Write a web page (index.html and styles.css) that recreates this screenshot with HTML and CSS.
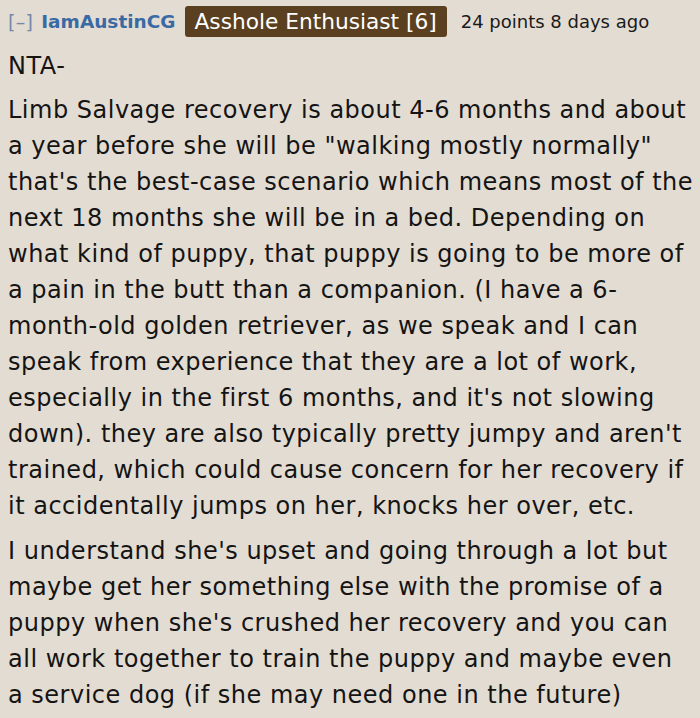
FILE: index.html
```html
<!DOCTYPE html>
<html>
<head>
<meta charset="utf-8">
<link rel="stylesheet" href="styles.css">
</head>
<body>
<div class="comment">
  <div class="header">
    <span class="toggle">[–]</span>
    <span class="author">IamAustinCG</span>
    <span class="flair">Asshole Enthusiast [6]</span>
    <span class="meta">24 points 8 days ago</span>
  </div>
  <div class="body">
    <p>NTA-</p>
    <p>Limb Salvage recovery is about 4-6 months and about a year before she will be "walking mostly normally" that's the best-case scenario which means most of the next 18 months she will be in a bed. Depending on what kind of puppy, that puppy is going to be more of a pain in the butt than a companion. (I have a 6-month-old golden retriever, as we speak and I can speak from experience that they are a lot of work, especially in the first 6 months, and it's not slowing down). they are also typically pretty jumpy and aren't trained, which could cause concern for her recovery if it accidentally jumps on her, knocks her over, etc.</p>
    <p>I understand she's upset and going through a lot but maybe get her something else with the promise of a puppy when she's crushed her recovery and you can all work together to train the puppy and maybe even a&nbsp;service dog (if she may need one in the future)</p>
  </div>
</div>
</body>
</html>
```
FILE: styles.css
```css
html, body {
  margin: 0;
  padding: 0;
  background: #e3dcd2;
}
.comment {
  padding: 6px 0 0 8px;
  font-family: "DejaVu Sans", Verdana, sans-serif;
  color: #141414;
}
.header {
  display: flex;
  align-items: center;
  height: 31px;
}
.toggle {
  color: #7587ab;
  font-size: 19px;
  letter-spacing: 0.3px;
  margin-right: 8px;
}
.author {
  color: #3a6aa4;
  font-weight: bold;
  font-size: 18.5px;
  margin-right: 9px;
}
.flair {
  background: #5a4020;
  color: #ffffff;
  font-size: 21.7px;
  height: 31px;
  line-height: 31px;
  padding: 0 10px;
  border-radius: 3px;
  margin-right: 14px;
}
.meta {
  font-size: 18px;
  color: #1a1a1a;
}
.body {
  font-size: 24px;
  line-height: 36px;
  letter-spacing: 0.5px;
}
.body p {
  margin: 8px 0 0 0;
}
.body p:first-child {
  margin-top: 11px;
}
.body p:last-child {
  margin-top: 9px;
}
```
